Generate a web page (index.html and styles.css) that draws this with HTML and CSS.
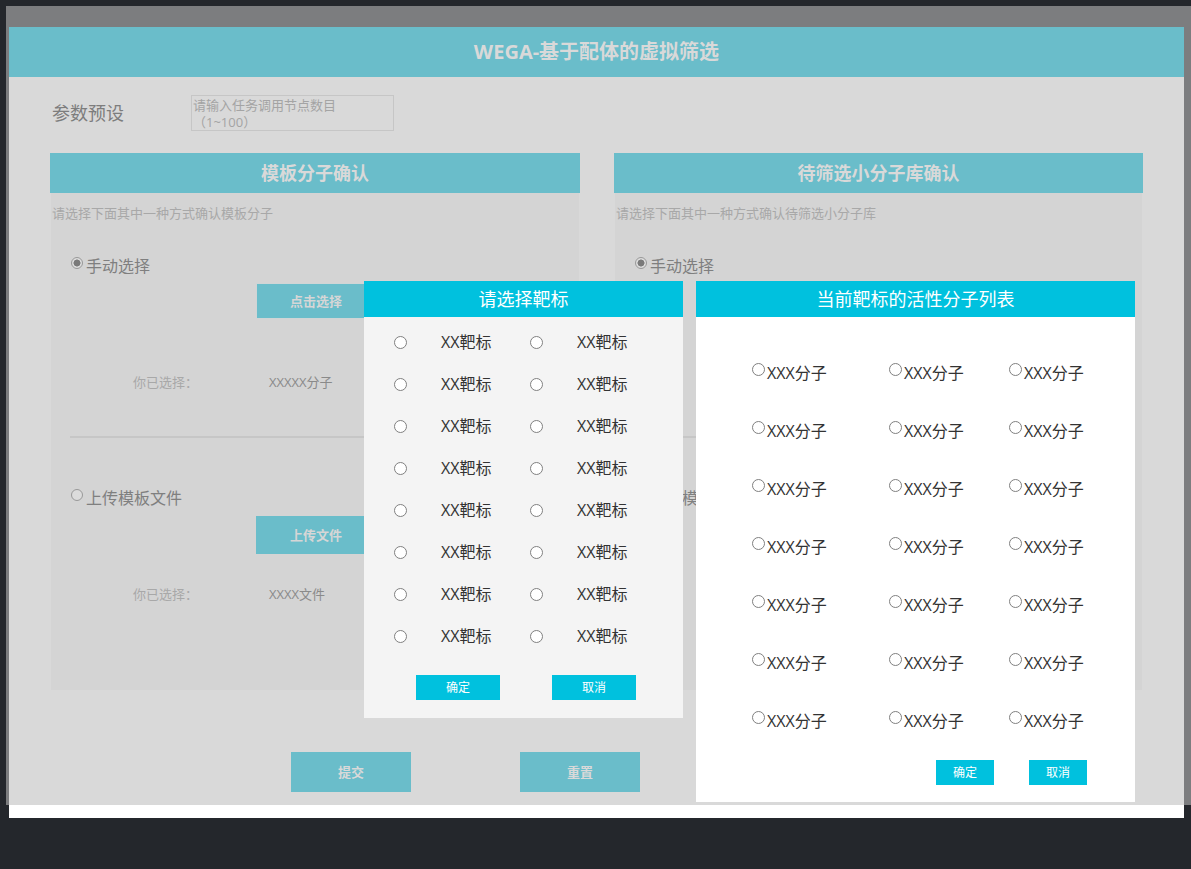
FILE: index.html
```html
<!DOCTYPE html>
<html lang="zh-CN">
<head>
<meta charset="utf-8">
<title>WEGA-基于配体的虚拟筛选</title>
<link rel="stylesheet" href="styles.css">
</head>
<body>
<div class="screen">
  <div class="page">
    <div class="page-main">
      <header class="topbar">WEGA-基于配体的虚拟筛选</header>
      <div class="param">
        <span class="param-label">参数预设</span>
        <div class="param-input">请输入任务调用节点数目<br>（1~100）</div>
      </div>
      <div class="panels">
        <section class="panel">
          <h2 class="panel-title">模板分子确认</h2>
          <div class="panel-body">
            <p class="desc">请选择下面其中一种方式确认模板分子</p>
            <div class="opt opt-first"><span class="radio checked"></span>手动选择</div>
            <div class="btn-row"><span class="act-btn">点击选择</span></div>
            <div class="chosen chosen-first"><span class="chosen-label">你已选择：</span><span class="chosen-val">XXXXX分子</span></div>
            <div class="divider"></div>
            <div class="opt opt-second"><span class="radio"></span>上传模板文件</div>
            <div class="btn-row"><span class="act-btn act-btn-upload">上传文件</span></div>
            <div class="chosen chosen-second"><span class="chosen-label">你已选择：</span><span class="chosen-val">XXXX文件</span></div>
          </div>
        </section>
        <section class="panel">
          <h2 class="panel-title">待筛选小分子库确认</h2>
          <div class="panel-body">
            <p class="desc">请选择下面其中一种方式确认待筛选小分子库</p>
            <div class="opt opt-first"><span class="radio checked"></span>手动选择</div>
            <div class="btn-row"><span class="act-btn"></span></div>
            <div class="chosen chosen-first"></div>
            <div class="divider"></div>
            <div class="opt opt-second"><span class="radio"></span>上传模板文件</div>
          </div>
        </section>
      </div>
      <div class="actions">
        <span class="main-btn">提交</span>
        <span class="main-btn">重置</span>
      </div>
    </div>

    <div class="modal modal-target">
      <div class="modal-head">请选择靶标</div>
      <div class="target-grid">
        <span class="m-radio"></span><span class="m-text">XX靶标</span><span class="m-radio"></span><span class="m-text">XX靶标</span>
        <span class="m-radio"></span><span class="m-text">XX靶标</span><span class="m-radio"></span><span class="m-text">XX靶标</span>
        <span class="m-radio"></span><span class="m-text">XX靶标</span><span class="m-radio"></span><span class="m-text">XX靶标</span>
        <span class="m-radio"></span><span class="m-text">XX靶标</span><span class="m-radio"></span><span class="m-text">XX靶标</span>
        <span class="m-radio"></span><span class="m-text">XX靶标</span><span class="m-radio"></span><span class="m-text">XX靶标</span>
        <span class="m-radio"></span><span class="m-text">XX靶标</span><span class="m-radio"></span><span class="m-text">XX靶标</span>
        <span class="m-radio"></span><span class="m-text">XX靶标</span><span class="m-radio"></span><span class="m-text">XX靶标</span>
        <span class="m-radio"></span><span class="m-text">XX靶标</span><span class="m-radio"></span><span class="m-text">XX靶标</span>
      </div>
      <div class="modal-btns modal-btns-target">
        <span class="m-btn m-btn-wide">确定</span>
        <span class="m-btn m-btn-wide">取消</span>
      </div>
    </div>

    <div class="modal modal-mol">
      <div class="modal-head">当前靶标的活性分子列表</div>
      <div class="mol-grid">
        <div class="mol"><span class="m-radio"></span><span class="m-text">XXX分子</span></div>
        <div class="mol"><span class="m-radio"></span><span class="m-text">XXX分子</span></div>
        <div class="mol"><span class="m-radio"></span><span class="m-text">XXX分子</span></div>
        <div class="mol"><span class="m-radio"></span><span class="m-text">XXX分子</span></div>
        <div class="mol"><span class="m-radio"></span><span class="m-text">XXX分子</span></div>
        <div class="mol"><span class="m-radio"></span><span class="m-text">XXX分子</span></div>
        <div class="mol"><span class="m-radio"></span><span class="m-text">XXX分子</span></div>
        <div class="mol"><span class="m-radio"></span><span class="m-text">XXX分子</span></div>
        <div class="mol"><span class="m-radio"></span><span class="m-text">XXX分子</span></div>
        <div class="mol"><span class="m-radio"></span><span class="m-text">XXX分子</span></div>
        <div class="mol"><span class="m-radio"></span><span class="m-text">XXX分子</span></div>
        <div class="mol"><span class="m-radio"></span><span class="m-text">XXX分子</span></div>
        <div class="mol"><span class="m-radio"></span><span class="m-text">XXX分子</span></div>
        <div class="mol"><span class="m-radio"></span><span class="m-text">XXX分子</span></div>
        <div class="mol"><span class="m-radio"></span><span class="m-text">XXX分子</span></div>
        <div class="mol"><span class="m-radio"></span><span class="m-text">XXX分子</span></div>
        <div class="mol"><span class="m-radio"></span><span class="m-text">XXX分子</span></div>
        <div class="mol"><span class="m-radio"></span><span class="m-text">XXX分子</span></div>
        <div class="mol"><span class="m-radio"></span><span class="m-text">XXX分子</span></div>
        <div class="mol"><span class="m-radio"></span><span class="m-text">XXX分子</span></div>
        <div class="mol"><span class="m-radio"></span><span class="m-text">XXX分子</span></div>
      </div>
      <div class="modal-btns modal-btns-mol">
        <span class="m-btn m-btn-narrow">确定</span>
        <span class="m-btn m-btn-narrow">取消</span>
      </div>
    </div>
  </div>
</div>
<div class="page-foot"></div>
</body>
</html>
```
FILE: styles.css
```css
html {
  background: #24272c;
}
body {
  margin: 0;
  padding-top: 6px;
  background: #24272c;
  font-family: "Open Sans", "Noto Sans CJK SC", sans-serif;
}
.screen {
  margin-left: 6px;
  width: 1185px;
  height: 799px;
  box-sizing: border-box;
  padding: 21px 7px 0 3px;
  background: #7c7d7f;
}
.page {
  position: relative;
  width: 1175px;
}
.page-main {
  height: 778px;
  background: #d9d9d9;
  overflow: hidden;
}
.page-foot {
  margin-left: 9px;
  width: 1175px;
  height: 13px;
  background: #ffffff;
}
.topbar {
  height: 50px;
  line-height: 50px;
  background: #6abdca;
  color: #d9d9d9;
  font-size: 20px;
  font-weight: 700;
  text-align: center;
}
.param {
  display: flex;
  align-items: center;
  margin-top: 18px;
  padding-left: 43px;
  height: 36px;
}
.param-label {
  width: 139px;
  font-size: 18px;
  color: #7d7d7d;
  line-height: 24px;
}
.param-input {
  width: 203px;
  height: 36px;
  box-sizing: border-box;
  border: 1px solid #c6c6c6;
  padding: 1px 1px 0;
  font-size: 13px;
  line-height: 17px;
  color: #a4a4a4;
  overflow: hidden;
}
.panels {
  display: flex;
  gap: 34px;
  margin-top: 22px;
  padding-left: 41px;
}
.panel {
  width: 530px;
}
.panel + .panel {
  width: 529px;
}
.panel-title {
  margin: 0;
  height: 40px;
  line-height: 40px;
  background: #6abdca;
  color: #d9d9d9;
  font-size: 18px;
  font-weight: 700;
  text-align: center;
}
.panel-body {
  height: 497px;
  background: #d4d4d4;
  margin: 0 1px;
  overflow: hidden;
}
.desc {
  margin: 12px 0 0 1px;
  font-size: 13px;
  line-height: 17px;
  color: #a8a8a8;
}
.opt {
  display: flex;
  align-items: flex-start;
  gap: 3px;
  padding-left: 20px;
  font-size: 16px;
  line-height: 20px;
  color: #7f7f7f;
  white-space: nowrap;
}
.opt-first {
  margin-top: 34px;
}
.opt-second {
  margin-top: 50px;
}
.radio {
  flex: none;
  width: 12px;
  height: 12px;
  box-sizing: border-box;
  margin-top: 1px;
  border: 1px solid #999999;
  border-radius: 50%;
  background: #dcdcdc;
}
.radio.checked {
  background: radial-gradient(circle, #7a7a7a 0 3.2px, #dcdcdc 3.8px);
}
.btn-row {
  padding-left: 205px;
  margin-top: 7px;
}
.act-btn {
  display: block;
  width: 120px;
  height: 36px;
  box-sizing: border-box;
  border: 1px solid #cfd5d6;
  background: #6abdca;
  color: #d6d6d6;
  font-size: 13px;
  font-weight: 700;
  line-height: 34px;
  text-align: center;
}
.act-btn-upload {
  height: 38px;
  line-height: 38px;
  border: 0;
}
.opt-second + .btn-row {
  margin-top: 8px;
}
.chosen {
  display: flex;
  height: 17px;
  padding-left: 82px;
  font-size: 13px;
  line-height: 17px;
  white-space: nowrap;
}
.chosen-first {
  margin-top: 55px;
}
.chosen-second {
  margin-top: 32px;
}
.chosen-label {
  width: 136px;
  color: #a8a8a8;
}
.chosen-val {
  color: #8a8a8a;
}
.divider {
  margin: 45px 19px 0;
  height: 2px;
  background: #c6c6c6;
}
.actions {
  display: flex;
  gap: 109px;
  margin-top: 62px;
  padding-left: 282px;
}
.main-btn {
  width: 120px;
  height: 40px;
  line-height: 40px;
  background: #6abdca;
  color: #d9d9d9;
  font-size: 13px;
  font-weight: 700;
  text-align: center;
}

/* modals */
.modal {
  position: absolute;
  top: 254px;
}
.modal-target {
  left: 355px;
  width: 319px;
  height: 437px;
  background: #f4f4f4;
}
.modal-mol {
  left: 687px;
  width: 439px;
  height: 521px;
  background: #ffffff;
}
.modal-head {
  height: 36px;
  line-height: 36px;
  background: #00c1de;
  color: #ffffff;
  font-size: 18px;
  text-align: center;
}
.m-radio {
  flex: none;
  width: 13px;
  height: 13px;
  box-sizing: border-box;
  border: 1px solid #808080;
  border-radius: 50%;
  background: #ffffff;
}
.m-text {
  font-size: 16px;
  line-height: 20px;
  color: #333333;
  white-space: nowrap;
}
.target-grid {
  display: grid;
  grid-template-columns: 47px 89px 47px auto;
  grid-auto-rows: 42px;
  align-items: center;
  padding: 4px 0 0 30px;
}
.modal-btns {
  display: flex;
}
.modal-btns-target {
  gap: 52px;
  margin-top: 18px;
  padding-left: 52px;
}
.modal-btns-mol {
  gap: 35px;
  margin-top: 10px;
  padding-left: 240px;
}
.m-btn {
  height: 25px;
  line-height: 25px;
  background: #00c1de;
  color: #ffffff;
  font-size: 12px;
  text-align: center;
}
.m-btn-wide {
  width: 84px;
}
.m-btn-narrow {
  width: 58px;
}
.mol-grid {
  display: grid;
  grid-template-columns: 137px 120px auto;
  grid-auto-rows: 58px;
  padding: 27px 0 0 56px;
}
.mol {
  display: flex;
  align-items: center;
  gap: 2px;
}
.mol .m-radio {
  margin-bottom: 7px;
}
```
